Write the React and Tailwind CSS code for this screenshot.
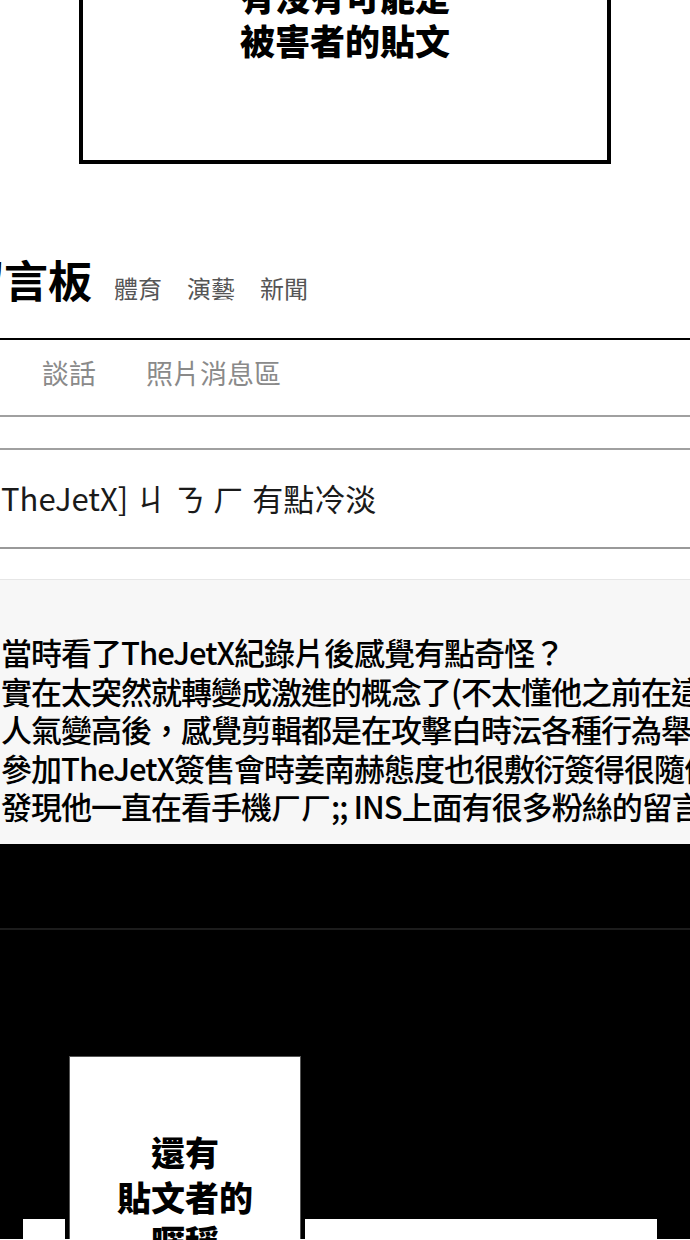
import React from "react";

const lines = [
  "當時看了TheJetX紀錄片後感覺有點奇怪？",
  "實在太突然就轉變成激進的概念了(不太懂他之前在這",
  "人氣變高後，感覺剪輯都是在攻擊白時沄各種行為舉止",
  "參加TheJetX簽售會時姜南赫態度也很敷衍簽得很隨便",
  "發現他一直在看手機ㄏㄏ;; INS上面有很多粉絲的留言",
];

const font = "font-['Noto_Sans_CJK_TC','Noto_Sans',sans-serif]";

export default function App() {
  return (
    <div className={`w-[690px] h-[1240px] overflow-hidden bg-white ${font}`}>
      {/* top caption panel */}
      <div className="ml-[79px] w-[532px] h-[204px] -mt-[40px] border-4 border-black pt-[10px] text-center text-black font-black text-[35px] leading-[44px]">
        <p>有沒有可能是</p>
        <p>被害者的貼文</p>
      </div>

      {/* board header */}
      <div className="mt-[87px] flex items-baseline whitespace-nowrap">
        <span className="ml-[-40px] text-[44px] leading-[56px] font-bold text-black">留言板</span>
        <div className="ml-[22px] flex gap-[25px] text-[24px] text-[#555] font-normal">
          <span>體育</span>
          <span>演藝</span>
          <span>新聞</span>
        </div>
      </div>
      <div className="mt-[31px] h-[2px] bg-black" />

      {/* tabs */}
      <div className="mt-[13px] pl-[42px] flex gap-[50px] text-[27px] leading-[40px] text-[#8a8a8a]">
        <span>談話</span>
        <span>照片消息區</span>
      </div>
      <div className="mt-[22px] h-[2px] bg-[#a0a0a0]" />
      <div className="mt-[31px] h-[2px] bg-[#a0a0a0]" />

      {/* thread title */}
      <div className="mt-[26px] pl-[1px] text-[31px] leading-[44px] text-[#1a1a1a] whitespace-nowrap">
        TheJetX] <span className="tracking-[8px]">ㄐㄋㄏ</span>有點冷淡
      </div>
      <div className="mt-[27px] h-[2px] bg-[#999]" />

      {/* post body */}
      <div className="mt-[30px] h-[265px] overflow-hidden bg-[#f7f7f7] border-t border-[#e6e6e6] pt-[53px]">
        {lines.map((t) => (
          <p key={t} className="pl-[1px] text-[31px] tracking-[-1px] leading-[38.5px] font-medium text-black whitespace-nowrap">
            {t}
          </p>
        ))}
      </div>

      {/* dark panel */}
      <div className="h-[395px] bg-black">
        <div className="pt-[84px]">
          <div className="h-[2px] bg-[#1c1c1c]" />
        </div>
        <div className="mt-[122px] flex h-[187px]">
          <div className="w-[23px]" />
          <div className="w-[42px] flex flex-col">
            <div className="h-[167px]" />
            <div className="flex-1 bg-white" />
          </div>
          <div className="w-[240px] border-4 border-b-0 border-black">
            <div className="h-full bg-white border border-b-0 border-[#555] pt-[73px] text-center text-black font-black text-[34px] leading-[44.5px]">
              <p>還有</p>
              <p>貼文者的</p>
              <p>暱稱</p>
            </div>
          </div>
          <div className="w-[352px] flex flex-col">
            <div className="h-[167px]" />
            <div className="flex-1 bg-white" />
          </div>
        </div>
      </div>
    </div>
  );
}
